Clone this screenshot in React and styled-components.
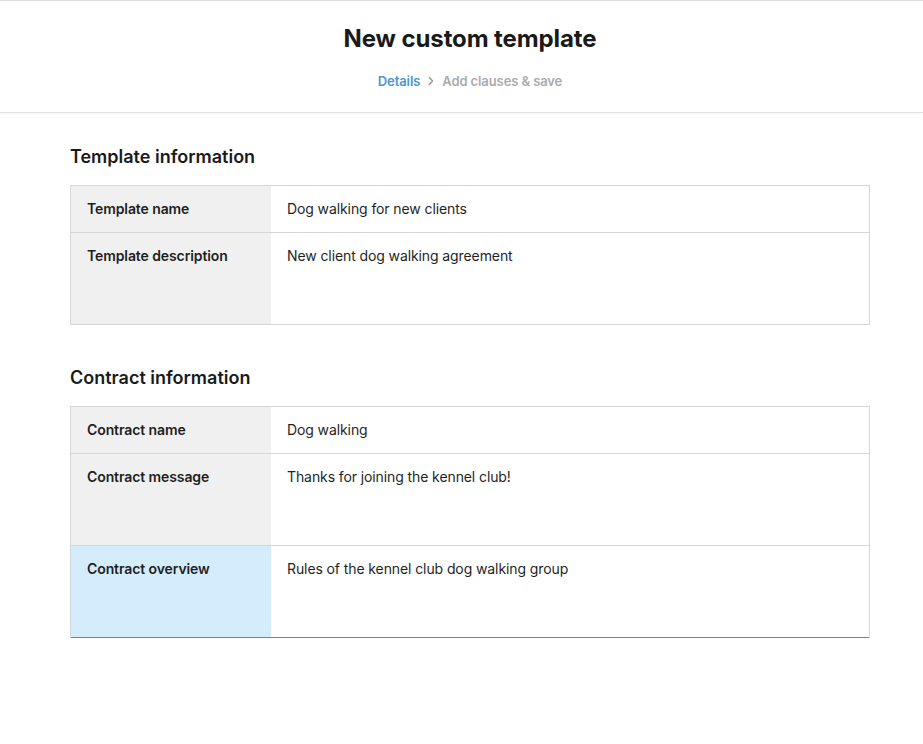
import React from 'react';
import styled, { createGlobalStyle } from 'styled-components';

const GlobalStyle = createGlobalStyle`
  body {
    margin: 0;
    background: #fff;
    font-family: Inter, "Noto Sans", sans-serif;
    color: #1a1a1a;
    -webkit-font-smoothing: antialiased;
  }
`;

//header
const Header = styled.header`
  padding: 24px 0 22px;
  border-top: 1px solid #dcdcdc;
  border-bottom: 1px solid #e2e2e2;
  box-shadow: 0 1px 2px rgba(0, 0, 0, 0.04);
`;
const HeaderInner = styled.div`
  display: flex;
  flex-direction: column;
  align-items: center;
  gap: 19px;
  width: 800px;
  margin-left: 70px;
`;
const Title = styled.h1`
  margin: 0;
  font-size: 24px;
  line-height: 28px;
  font-weight: 700;
  letter-spacing: -0.1px;
  color: #1a1a1a;
`;
const Crumbs = styled.nav`
  display: flex;
  align-items: center;
  gap: 8px;
  font-size: 13px;
  line-height: 18px;
  font-weight: 600;
  letter-spacing: -0.1px;
`;
const Crumb = styled.span`
  color: ${p => (p.$active ? '#4a97cf' : '#ababab')};
`;

//content
const Main = styled.main`
  display: flex;
  flex-direction: column;
  padding: 32px 70px 0;
`;
const Section = styled.section`
  display: flex;
  flex-direction: column;
  gap: 16px;
  width: 800px;
  & + & {
    margin-top: 41px;
  }
`;
const SectionTitle = styled.h2`
  margin: 0;
  font-size: 18px;
  line-height: 24px;
  font-weight: 600;
  color: #1a1a1a;
`;
const Table = styled.div`
  display: flex;
  flex-direction: column;
  border: 1px solid #d6d6d6;
`;
const Row = styled.div`
  display: grid;
  grid-template-columns: 200px 1fr;
  min-height: ${p => (p.$tall ? '91px' : '46px')};
  & + & {
    border-top: 1px solid #d6d6d6;
  }
  &.focused {
    margin-bottom: -1px;
    border-bottom: 1px solid #4a90c0;
  }
`;
const Label = styled.div`
  padding: 13px 16px;
  font-size: 14px;
  line-height: 20px;
  font-weight: 600;
  letter-spacing: -0.1px;
  color: #1f1f1f;
  background: ${p => (p.$focused ? '#d3edfc' : '#f0f0f0')};
`;
const Value = styled.div`
  padding: 13px 16px;
  font-size: 14px;
  line-height: 20px;
  font-weight: 400;
  letter-spacing: -0.1px;
  color: #1f1f1f;
  background: #fff;
`;

const Chevron = () => (
  <svg width="6" height="10" viewBox="0 0 6 10" fill="none">
    <path d="M1.2 1.5 4.6 5 1.2 8.5" stroke="#9a9a9a" strokeWidth="1.5" strokeLinecap="round" strokeLinejoin="round" />
  </svg>
);

const sections = [
  {
    title: 'Template information',
    rows: [
      ['Template name', 'Dog walking for new clients'],
      ['Template description', 'New client dog walking agreement', true],
    ],
  },
  {
    title: 'Contract information',
    rows: [
      ['Contract name', 'Dog walking'],
      ['Contract message', 'Thanks for joining the kennel club!', true],
      ['Contract overview', 'Rules of the kennel club dog walking group', true, true],
    ],
  },
];

function App() {
  return (
    <>
      <GlobalStyle />
      <Header>
        <HeaderInner>
          <Title>New custom template</Title>
          <Crumbs>
            <Crumb $active>Details</Crumb>
            <Chevron />
            <Crumb>Add clauses &amp; save</Crumb>
          </Crumbs>
        </HeaderInner>
      </Header>
      <Main>
        {sections.map(section => (
          <Section key={section.title}>
            <SectionTitle>{section.title}</SectionTitle>
            <Table>
              {section.rows.map(([label, value, tall, focused]) => (
                <Row key={label} $tall={tall} className={focused ? 'focused' : ''}>
                  <Label $focused={focused}>{label}</Label>
                  <Value>{value}</Value>
                </Row>
              ))}
            </Table>
          </Section>
        ))}
      </Main>
    </>
  );
}

export default App;
